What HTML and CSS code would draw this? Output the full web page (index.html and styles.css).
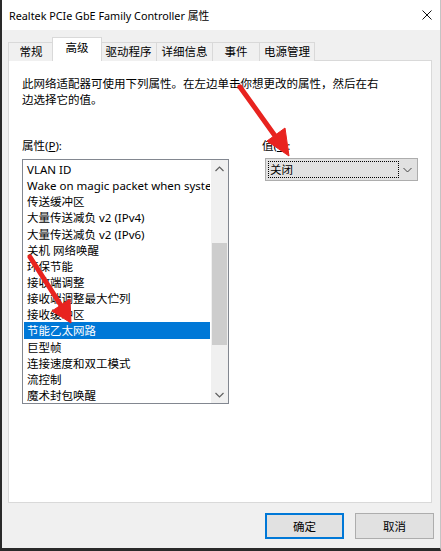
FILE: index.html
```
<!DOCTYPE html>
<html lang="zh-CN">
<head>
<meta charset="utf-8">
<title>Realtek PCIe GbE Family Controller 属性</title>
<link rel="stylesheet" href="styles.css">
</head>
<body>
<div class="window">
  <div class="titlebar">
    <span class="title">Realtek PCIe GbE Family Controller 属性</span>
    <svg class="close" width="10" height="10" viewBox="0 0 10 10"><path d="M0.5 0.5 L9.5 9.5 M9.5 0.5 L0.5 9.5" stroke="#111" stroke-width="1" fill="none"/></svg>
  </div>
  <div class="content">
    <div class="tabs">
      <div class="tab tab-w45">常规</div>
      <div class="tab selected tab-w48">高级</div>
      <div class="tab tab-w56">驱动程序</div>
      <div class="tab tab-w56">详细信息</div>
      <div class="tab tab-w47">事件</div>
      <div class="tab tab-w55">电源管理</div>
    </div>
    <div class="panel">
      <p class="desc">此网络适配器可使用下列属性。在左边单击你想更改的属性，然后在右<br>边选择它的值。</p>
      <div class="cols">
        <div class="col-left">
          <div class="label">属性(<u>P</u>):</div>
          <div class="listbox">
            <div class="items">
              <div class="item">VLAN ID</div>
              <div class="item">Wake on magic packet when system is in the S0ix power state</div>
              <div class="item">传送缓冲区</div>
              <div class="item">大量传送减负 v2 (IPv4)</div>
              <div class="item">大量传送减负 v2 (IPv6)</div>
              <div class="item">关机 网络唤醒</div>
              <div class="item">环保节能</div>
              <div class="item">接收端调整</div>
              <div class="item">接收端调整最大伫列</div>
              <div class="item">接收缓冲区</div>
              <div class="item active">节能乙太网路</div>
              <div class="item">巨型帧</div>
              <div class="item">连接速度和双工模式</div>
              <div class="item">流控制</div>
              <div class="item">魔术封包唤醒</div>
            </div>
            <div class="scrollbar">
              <div class="sb-btn"><svg width="9" height="6" viewBox="0 0 9 6"><path d="M0.5 5 L4.5 1 L8.5 5" stroke="#606060" stroke-width="1.2" fill="none"/></svg></div>
              <div class="sb-pre"></div>
              <div class="sb-thumb"></div>
              <div class="sb-post"></div>
              <div class="sb-btn"><svg width="9" height="6" viewBox="0 0 9 6"><path d="M0.5 1 L4.5 5 L8.5 1" stroke="#606060" stroke-width="1.2" fill="none"/></svg></div>
            </div>
          </div>
        </div>
        <div class="col-right">
          <div class="label">值(<u>V</u>):</div>
          <div class="combo">
            <span class="focus">关闭</span>
            <svg class="chev" width="9" height="6" viewBox="0 0 9 6"><path d="M0.5 1 L4.5 5 L8.5 1" stroke="#444" stroke-width="1" fill="none"/></svg>
          </div>
        </div>
      </div>
    </div>
    <div class="buttons">
      <div class="btn default">确定</div>
      <div class="btn">取消</div>
    </div>
  </div>
  <svg class="arrows" width="441" height="551" viewBox="0 0 441 551">
    <g fill="#e8231f" stroke="#e8231f">
      <line x1="240" y1="87" x2="278" y2="140" stroke-width="5" stroke-linecap="round"/>
      <polygon points="289,156 267,141 285,128" stroke-width="1"/>
      <line x1="30" y1="257" x2="62" y2="307" stroke-width="5" stroke-linecap="round"/>
      <polygon points="71,323 52,311 70,299" stroke-width="1"/>
    </g>
  </svg>
</div>
</body>
</html>
```
FILE: styles.css
```
* { box-sizing: border-box; }
html, body { margin: 0; padding: 0; }
body {
  font-family: "Noto Sans", "Noto Sans CJK SC", sans-serif;
  font-size: 11.5px;
  color: #000;
  background: #f0f0f0;
}
.window {
  position: relative;
  width: 441px;
  height: 551px;
  background: #f0f0f0;
  border-left: 2px solid #2a2a2a;
  border-bottom: 3px solid #2a2a2a;
  border-right: 1px solid #c4c4c4;
  display: flex;
  flex-direction: column;
  overflow: hidden;
}
.titlebar {
  height: 30px;
  background: #fff;
  display: flex;
  align-items: center;
  justify-content: space-between;
  padding: 0 8px 1px 7px;
  flex: none;
}
.title { font-size: 10.8px; color: #000; }
.close { display: block; }
.content {
  padding: 8px 7px 0 6px;
  display: flex;
  flex-direction: column;
}
.tabs {
  display: flex;
  align-items: flex-end;
  height: 23px;
  margin-bottom: -1px;
  position: relative;
  z-index: 1;
}
.tab {
  height: 19px;
  border: 1px solid #d9d9d9;
  border-bottom: none;
  margin-left: -1px;
  background: #f0f0f0;
  text-align: center;
  line-height: 18px;
}
.tab:first-child { margin-left: 0; }
.tab.selected {
  height: 24px;
  background: #fff;
  line-height: 20px;
  margin-left: -2px;
  margin-right: -1px;
  position: relative;
  z-index: 2;
}
.tab-w45 { width: 46px; }
.tab-w48 { width: 50px; }
.tab-w56 { width: 57px; }
.tab-w47 { width: 48px; }
.tab-w55 { width: 56px; }
.panel {
  width: 424px;
  height: 443px;
  background: #fff;
  border: 1px solid #d9d9d9;
  padding: 15px 13px 0 13px;
  flex: none;
}
.desc {
  margin: 0;
  line-height: 16px;
}
.cols {
  display: flex;
  margin-top: 30px;
  gap: 33px;
}
.label { line-height: 16px; }
.col-left { width: 207px; }
.listbox {
  margin-top: 5px;
  width: 207px;
  height: 245px;
  border: 1px solid #828790;
  display: flex;
  background: #fff;
}
.items {
  width: 188px;
  overflow: hidden;
  padding-top: 1px;
}
.item {
  height: 16.15px;
  line-height: 17px;
  margin: 0 1px;
  padding-left: 3px;
  white-space: nowrap;
  overflow: hidden;
}
.item.active {
  background: #0078d7;
  color: #fff;
}
.scrollbar {
  width: 17px;
  background: #f0f0f0;
  display: flex;
  flex-direction: column;
}
.sb-btn {
  height: 17px;
  display: flex;
  align-items: center;
  justify-content: center;
  flex: none;
}
.sb-pre { height: 66px; flex: none; }
.sb-thumb { height: 102px; background: #cdcdcd; margin: 0 1px; flex: none; }
.sb-post { flex: 1; }
.col-right { width: 160px; }
.combo {
  margin-top: 4px;
  margin-left: 3px;
  width: 153px;
  height: 23px;
  background: #e1e1e1;
  border: 1px solid #adadad;
  display: flex;
  align-items: center;
  padding: 0 5px 0 2px;
}
.focus {
  width: 131px;
  height: 17px;
  border: 1px dotted #000;
  line-height: 15px;
  padding-left: 1px;
}
.chev { margin-left: auto; display: block; }
.buttons {
  display: flex;
  justify-content: flex-end;
  gap: 11px;
  margin-top: 10px;
  margin-right: -1px;
}
.btn {
  width: 79px;
  height: 26px;
  background: #e1e1e1;
  border: 1px solid #adadad;
  display: flex;
  align-items: center;
  justify-content: center;
}
.btn.default {
  border: 2px solid #0078d7;
}
.arrows {
  position: absolute;
  left: -2px;
  top: 0;
  pointer-events: none;
}
```
